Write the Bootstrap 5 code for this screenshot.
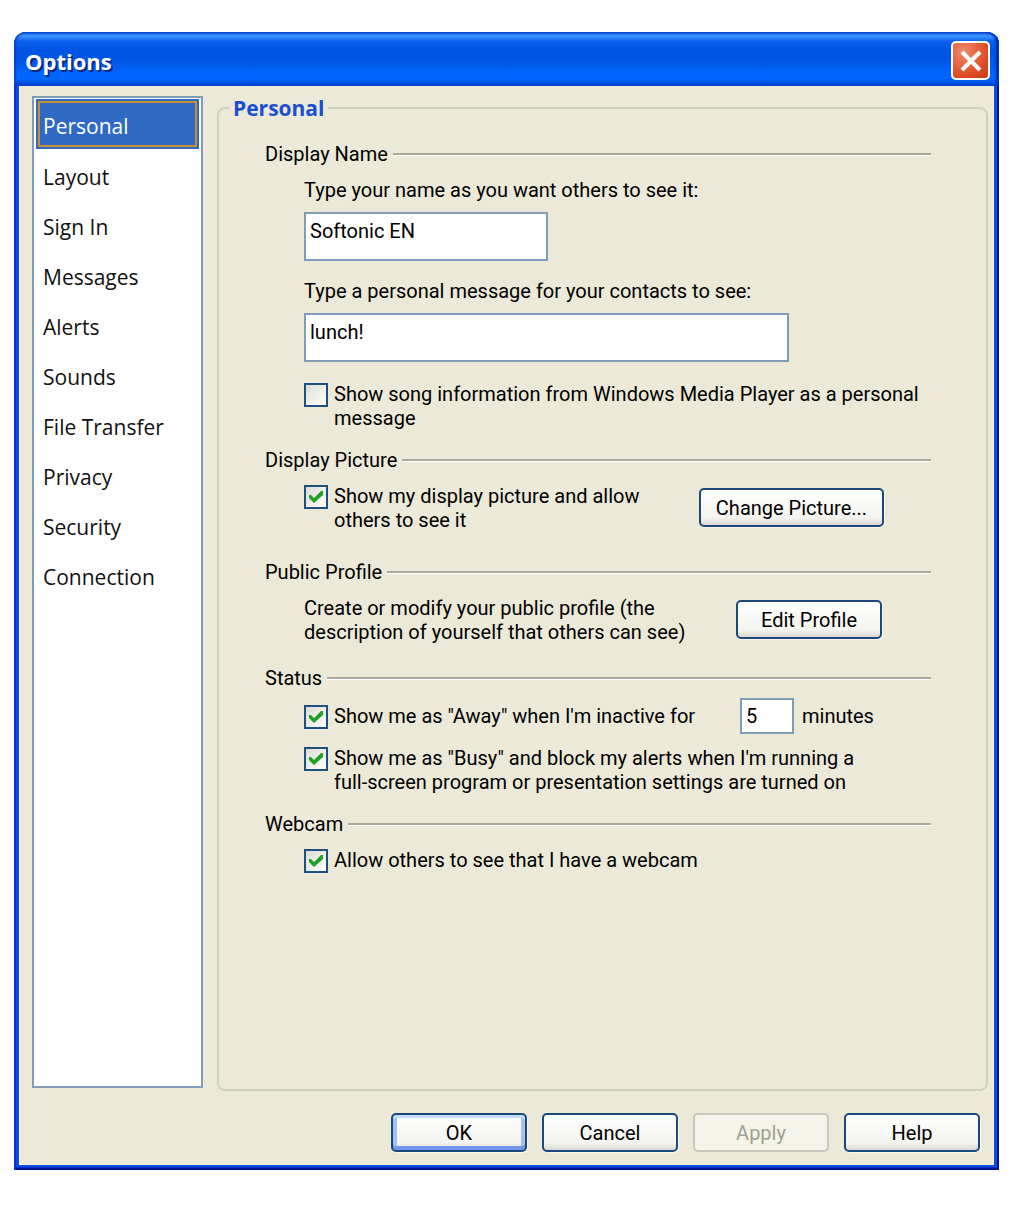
<!DOCTYPE html>
<html lang="en">
<head>
<meta charset="utf-8">
<meta name="viewport" content="width=device-width, initial-scale=1">
<title>Options</title>
<link href="https://cdn.jsdelivr.net/npm/bootstrap@5.3.0/dist/css/bootstrap.min.css" rel="stylesheet">
<style>
body { background: #fff; color: #000; font: 20px/24px Roboto, "Liberation Sans", sans-serif; }
.window { min-height: calc(100vh - 68px); margin: 32px 21px 36px 14px; padding: 0 5px 5px; background: #0a4be0; border-radius: 12px 12px 0 0;
  box-shadow: inset 2px 0 #0831d9, inset -2px -2px #00138c, inset 0 -3px #0831c9; }
.titlebar { height: 54px; margin: 0 -5px; padding: 0 9px 0 11px; border-radius: 12px 12px 0 0;
  background: linear-gradient(#0a4fd8 0, #3f96ff 4px, #0b62ee 9px, #0054e3 18px, #0055e5 28px, #0066ff 42px, #0065fb 47px, #0040c8 54px);
  box-shadow: inset 2px 0 2px #0a3fd0, inset -3px 0 2px #0030b8; }
.titlebar h1 { margin: 4px 0 0; font: bold 22px/24px "Open Sans", "Noto Sans", sans-serif; color: #fff; text-shadow: 2px 2px #0a2a80; }
.close-btn { width: 39px; height: 39px; margin-top: 3px; border: 2px solid #fff; border-radius: 5px; background: radial-gradient(circle at 30% 25%, #ec8a6c, #e0512c 60%, #c63a10); }
.client { background: #ece9d8; padding: 10px 6px 13px 13px; box-shadow: inset 1px -1px #fbf3d8, inset -1px 0 #fbf3d8; }
.side { width: 171px; margin: 0 14px 3px 0; padding: 1px 2px; border: 2px solid #7f9db9; background: #fff; font: 21px/50px "Open Sans", "Noto Sans", sans-serif; }
.side a { padding: 2px 7px 0; height: 50px; line-height: 50px; border: 0; color: #111; background: none; text-decoration: none; white-space: nowrap; }
.side a.active { height: 50px; margin-bottom: 1px; padding: 1px 6px 0; border: 1px solid #316ac5; outline: 2px solid #c8902f; outline-offset: -4px; background: #316ac5; color: #fff; }
.panel { margin: 0; padding: 0 55px 20px 46px; border: 2px solid #d0d0bf; border-radius: 8px; }
.panel legend { margin: 0 0 0 -36px; padding: 0 4px; font: bold 21px/24px "Open Sans", "Noto Sans", sans-serif; color: #1a4fd0; }
.sect { margin: 0; font-size: 20px; line-height: 24px; font-weight: 400; gap: 5px; }
.sect::after { content: ""; flex: 1; height: 3px; border-top: 2px solid #aca899; border-bottom: 1px solid #fff; }
.inset { margin-left: 39px; }
.xp-input { display: block; border: 2px solid #7f9db9; border-radius: 0; background: #fff; color: #000; font-size: 20px; line-height: 24px; padding: 0 4px 12px; height: 49px; }
.w-name { width: 244px; } .w-message { width: 485px; } .w-min { width: 54px; height: 36px; padding-bottom: 0; }
.xp-check { gap: 6px; }
.xp-check .form-check-input { flex: none; width: 24px; height: 24px; margin: 1px 0 0; border: 2px solid #1c5180; border-radius: 0; background-color: #fff; background-image: linear-gradient(135deg, #dcdcd7, #fff); }
.xp-check .form-check-input:checked { border-color: #1c5180; background-color: #fff; background-size: 100%;
  background-image: url("data:image/svg+xml,%3Csvg xmlns='http://www.w3.org/2000/svg' viewBox='0 0 20 20'%3E%3Cpath fill='%2321a121' d='M3 8h2l3 3 7-7h2v4l-9 8L3 11z'/%3E%3C/svg%3E"), linear-gradient(135deg, #dcdcd7, #fff); }
.away { min-width: 436px; }
.xp-btn { height: 39px; padding: 0; border: 2px solid #1a4a7c; border-radius: 5px; background: linear-gradient(#fff, #f3f3ef 80%, #dcd8cf); color: #000; font-size: 20px; line-height: 24px; box-shadow: 1px 1px #faf7ea; }
.xp-btn.primary { box-shadow: inset 0 3px #c4dcfd, inset 0 -4px #7396e8, inset 4px 0 #a4c0f4, inset -4px 0 #a4c0f4, 1px 1px #faf7ea; }
.xp-btn:disabled { background: #f5f4ea; border-color: #c9c7ba; color: #a1a192; opacity: 1; box-shadow: none; }
.w-picture { width: 185px; margin: 4px 47px 0 0; } .w-profile { width: 146px; margin: 4px 49px 0 0; }
.t8 { margin-top: 8px; } .t12 { margin-top: 12px; } .t18 { margin-top: 18px; } .t20 { margin-top: 20px; } .t22 { margin-top: 22px; } .t28 { margin-top: 28px; }
.b10 { margin-bottom: 10px; }
.actions { margin: 22px 8px 0 0; gap: 15px; }
.actions .xp-btn { width: 136px; }
</style>
</head>
<body>
<main class="window d-flex flex-column">
  <header class="titlebar d-flex align-items-center justify-content-between">
    <h1>Options</h1>
    <button type="button" class="close-btn d-flex align-items-center justify-content-center p-0" aria-label="Close">
      <svg width="24" height="24" viewBox="0 0 24 24" fill="none" stroke="#fff" stroke-width="4" aria-hidden="true"><path d="M3 3l18 18M21 3L3 21"/></svg>
    </button>
  </header>
  <form class="client flex-grow-1 d-flex flex-column">
    <div class="d-flex flex-grow-1">
      <nav class="side flex-shrink-0 d-flex flex-column" aria-label="Categories">
        <a href="#" class="active" aria-current="page">Personal</a>
        <a href="#">Layout</a>
        <a href="#">Sign In</a>
        <a href="#">Messages</a>
        <a href="#">Alerts</a>
        <a href="#">Sounds</a>
        <a href="#">File Transfer</a>
        <a href="#">Privacy</a>
        <a href="#">Security</a>
        <a href="#">Connection</a>
      </nav>
      <fieldset class="panel flex-grow-1">
        <legend class="float-none w-auto">Personal</legend>
        <h2 class="sect d-flex align-items-center t22">Display Name</h2>
        <div class="inset t12">
          <label class="d-block b10" for="name">Type your name as you want others to see it:</label>
          <input class="xp-input w-name" id="name" type="text" value="Softonic EN">
          <label class="d-block t18 b10" for="message">Type a personal message for your contacts to see:</label>
          <input class="xp-input w-message" id="message" type="text" value="lunch!">
          <div class="xp-check d-flex t20">
            <input class="form-check-input" type="checkbox" id="song">
            <label for="song">Show song information from Windows Media Player as a personal<br>message</label>
          </div>
        </div>

        <h2 class="sect d-flex align-items-center t18">Display Picture</h2>
        <div class="inset t12 d-flex justify-content-between align-items-start">
          <div class="xp-check d-flex">
            <input class="form-check-input" type="checkbox" id="picture" checked>
            <label for="picture">Show my display picture and allow<br>others to see it</label>
          </div>
          <button type="button" class="btn xp-btn w-picture">Change Picture...</button>
        </div>

        <h2 class="sect d-flex align-items-center t28">Public Profile</h2>
        <div class="inset t12 d-flex justify-content-between align-items-start">
          <p class="m-0">Create or modify your public profile (the<br>description of yourself that others can see)</p>
          <button type="button" class="btn xp-btn w-profile">Edit Profile</button>
        </div>

        <h2 class="sect d-flex align-items-center t22">Status</h2>
        <div class="inset t8 d-flex align-items-center">
          <div class="xp-check away d-flex">
            <input class="form-check-input" type="checkbox" id="away" checked>
            <label for="away">Show me as "Away" when I'm inactive for</label>
          </div>
          <input class="xp-input w-min" id="minutes" type="text" value="5">
          <label class="ms-2" for="minutes">minutes</label>
        </div>
        <div class="inset t12 xp-check d-flex">
          <input class="form-check-input" type="checkbox" id="busy" checked>
          <label for="busy">Show me as "Busy" and block my alerts when I'm running a<br>full-screen program or presentation settings are turned on</label>
        </div>

        <h2 class="sect d-flex align-items-center t18">Webcam</h2>
        <div class="inset t12 xp-check d-flex">
          <input class="form-check-input" type="checkbox" id="webcam" checked>
          <label for="webcam">Allow others to see that I have a webcam</label>
        </div>
      </fieldset>
    </div>
    <div class="actions d-flex justify-content-end">
      <button type="button" class="btn xp-btn primary">OK</button>
      <button type="button" class="btn xp-btn">Cancel</button>
      <button type="button" class="btn xp-btn" disabled>Apply</button>
      <button type="button" class="btn xp-btn">Help</button>
    </div>
  </form>
</main>
<script src="https://cdn.jsdelivr.net/npm/bootstrap@5.3.0/dist/js/bootstrap.bundle.min.js"></script>
</body>
</html>
